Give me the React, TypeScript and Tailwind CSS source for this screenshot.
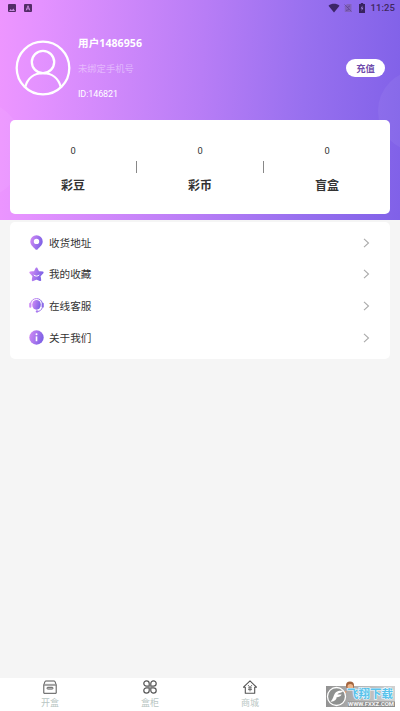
import React from "react";

const Gradient = ({ id }: { id: string }) => (
  <defs>
    <linearGradient id={id} x1="0" y1="0" x2="1" y2="0.3">
      <stop offset="0" stopColor="#d58cf6" />
      <stop offset="1" stopColor="#8163e6" />
    </linearGradient>
  </defs>
);

const PinIcon = () => (
  <svg viewBox="0 0 15 15" className="size-[15px]">
    <Gradient id="pin" />
    <path
      fill="url(#pin)"
      fillRule="evenodd"
      d="M7.500.3a6.200 6.200 0 0 1 6.200 6.200c0 3.300-2.700 5.400-5 7.700-.7.7-1.700.7-2.400 0C4 11.900 1.300 9.800 1.300 6.500A6.200 6.200 0 0 1 7.500.3Zm0 3.400a2.700 2.700 0 1 0 0 5.400 2.700 2.700 0 0 0 0-5.400Z"
    />
  </svg>
);

const StarIcon = () => (
  <svg viewBox="0 0 15 15" className="size-[15px]">
    <Gradient id="star" />
    <path
      fill="url(#star)"
      stroke="url(#star)"
      strokeWidth="2"
      strokeLinejoin="round"
      d="m7.500 1.500 1.700 3.400 4.400.6-3 3.200.6 4.400-3.700-1.600-3.700 1.600.6-4.400-3-3.200 4.400-.6Z"
    />
    <path d="M5 8.200c1.100 1.300 3.900 1.300 5 0" fill="none" stroke="#fff" strokeWidth="1" strokeLinecap="round" />
  </svg>
);

const HeadsetIcon = () => (
  <svg viewBox="0 0 15 15" className="size-[15px]">
    <Gradient id="headset" />
    <ellipse cx="7.500" cy="6.800" rx="4.300" ry="4.900" fill="url(#headset)" />
    <path d="M1.700 5.200C2.400 2.100 4.700.6 7.500.6s5.100 1.500 5.800 4.600" fill="none" stroke="url(#headset)" strokeWidth="1" />
    <rect x=".2" y="4.700" width="2.200" height="5" rx="1" fill="#ce8bf6" />
    <rect x="12.600" y="4.700" width="2.200" height="5" rx="1" fill="#8a68e8" />
    <path d="M13.300 9.500c-.6 2.500-2.400 3.700-4.800 4" fill="none" stroke="#9870eb" strokeWidth="1" />
    <circle cx="8" cy="13.400" r="1.200" fill="#a878ef" />
  </svg>
);

const InfoIcon = () => (
  <svg viewBox="0 0 15 15" className="size-[15px]">
    <Gradient id="info" />
    <circle cx="7.500" cy="7.500" r="7.200" fill="url(#info)" />
    <circle cx="7.500" cy="4.300" r="1" fill="#fff" />
    <path d="M7.500 6.400v4.800" stroke="#fff" strokeWidth="1.600" />
  </svg>
);

const BoxIcon = () => (
  <svg viewBox="0 0 14 14" className="size-[14px]" fill="none" stroke="#555" strokeWidth="1">
    <path d="M.8 4.600 2.300 1h9.400l1.500 3.600v8.700H.8Z" strokeLinejoin="round" />
    <path d="M1 4.300h12v1.200H1Z" fill="#999" stroke="#888" strokeWidth=".5" />
    <rect x="4" y="7.300" width="6" height="1.700" rx=".8" />
  </svg>
);

const CloverIcon = () => (
  <svg viewBox="0 0 14 14" className="size-[14px]" fill="none" stroke="#555" strokeWidth="1.200">
    <path d="M6.200 6.200H3.500a2.700 2.700 0 1 1 2.700-2.700ZM7.800 6.200h2.700a2.700 2.700 0 1 0-2.700-2.700ZM6.200 7.800H3.500a2.700 2.700 0 1 0 2.700 2.700ZM7.800 7.800h2.700a2.700 2.700 0 1 1-2.700 2.700Z" />
  </svg>
);

const ShopIcon = () => (
  <svg viewBox="0 0 14 14" className="size-[14px]" fill="none" stroke="#555" strokeWidth="1.100">
    <path d="M2.300 13.200V7.200H.5L7 .8l6.500 6.400h-1.800v6Z" strokeLinejoin="round" />
    <path d="m5 5 2 2.400L9 5M7 7.400v4M5 7.900h4M5 9.600h4" strokeWidth=".8" />
  </svg>
);

const stats = ["彩豆", "彩币", "盲盒"];

const menu = [
  { label: "收货地址", icon: <PinIcon /> },
  { label: "我的收藏", icon: <StarIcon /> },
  { label: "在线客服", icon: <HeadsetIcon /> },
  { label: "关于我们", icon: <InfoIcon /> },
];

const tabs = [
  { label: "开盒", icon: <BoxIcon /> },
  { label: "盒柜", icon: <CloverIcon /> },
  { label: "商城", icon: <ShopIcon /> },
];

function StatusBar() {
  return (
    <div className="flex h-4 items-center justify-between pl-2 pr-[5px] text-[#40275f]">
      <div className="flex items-center gap-2">
        <svg viewBox="0 0 8 8" className="size-2">
          <rect width="8" height="8" rx="1" fill="#532b67" />
          <path d="m1 7 1.700-2 1.200 1.200L5.400 4.500 7 7Z" fill="#c68bdf" />
        </svg>
        <svg viewBox="0 0 8 8" className="size-2">
          <rect width="8" height="8" rx="1" fill="#532b67" />
          <path d="M2.200 6.400 4 1.700l1.800 4.700M2.800 4.900h2.400" fill="none" stroke="#cf91e6" strokeWidth=".9" />
        </svg>
      </div>
      <div className="flex items-center">
        <svg viewBox="0 0 12 10" className="mr-1 h-[10px] w-3">
          <path d="M.5 2.800C3.700.2 8.300.2 11.500 2.800L6 9.600Z" fill="#3c2568" />
        </svg>
        <svg viewBox="0 0 8 10" className="mr-[7px] h-[10px] w-2">
          <path d="M3 1h4.500v8H.8V3.200Z" fill="#8262bd" />
          <path d="m.5 1.500 7 7M3 4.800l3-2M2 7.500l3-1" stroke="#5b408f" strokeWidth=".7" />
        </svg>
        <svg viewBox="0 0 6 10" className="mr-[5px] h-[10px] w-[6px]">
          <path d="M1.800 0h2.400v.9H6V10H0V.9h1.800Z" fill="#38235f" />
          <path d="M3.500 2.500 1.700 5.600h1.200L2.500 8l1.900-3.200H3.200Z" fill="#a587e8" />
        </svg>
        <span className="text-[9.500px] font-medium leading-none tracking-[0.1px]">11:25</span>
      </div>
    </div>
  );
}

function Watermark() {
  return (
    <div className="absolute bottom-1 right-[5px] h-[26px] w-[69px]">
      <svg viewBox="0 0 69 26" className="size-full">
        <defs>
          <linearGradient id="plate" x1="0" y1="0" x2="1" y2="0">
            <stop offset="0" stopColor="#929292" />
            <stop offset=".5" stopColor="#b5b5b5" />
            <stop offset="1" stopColor="#d2d2d2" />
          </linearGradient>
        </defs>
        <rect y="5" width="69" height="21" fill="url(#plate)" />
        <rect x="22" y="20.500" width="47" height="5.500" fill="#8d8d8d" />
        <circle cx="24" cy="4.500" r="4" fill="#a2653f" />
        <circle cx="24.300" cy="5.800" r="2.800" fill="#efb68b" />
        <path d="m20 10-2 4M28 10l2 3" stroke="#df9c70" strokeWidth="1.500" />
        <circle cx="10.500" cy="15.500" r="9" fill="#8f9190" stroke="#fff" strokeWidth="1.300" />
        <path d="M17.500 9.500c-4 .2-7 .3-8.800 3.200-1.400 2.400-1.300 5-4.200 8 4 .2 5.800-1.700 6.300-4.600 2.700.2 4-.8 4.800-2.500h-4.200c1.600-2.500 4.300-1.200 6.100-4.100Z" fill="#fff" />
        <text x="21" y="17.300" fontSize="11.500" fontWeight="700" fill="#59c2eb" stroke="#edfaff" strokeWidth="1.200" paintOrder="stroke" textLength="46">
          飞翔下载
        </text>
        <text x="22" y="25.200" fontSize="5" fontWeight="700" fill="#f4f4f4" textLength="46" lengthAdjust="spacingAndGlyphs" className="font-[Roboto]">
          WWW.FXXZ.COM
        </text>
      </svg>
    </div>
  );
}

export default function App() {
  return (
    <div className="flex h-[711px] w-[400px] flex-col overflow-hidden bg-[#f5f5f5] font-[Roboto,'Noto_Sans_CJK_SC',sans-serif] text-[#333]">
      <header className="relative h-[220px] shrink-0 overflow-hidden bg-[linear-gradient(93deg,#ee96ff_0%,#e492ff_10%,#b87df6_50%,#9870ef_75%,#8061e8_100%)]">
        <div className="absolute -left-[76px] top-[100px] size-[100px] rounded-full bg-white/5" />
        <div className="absolute -right-[60px] top-[70px] size-[82px] rounded-full bg-white/5" />
        <div className="relative">
          <StatusBar />
          <div className="flex h-[104px] items-start px-[15px] text-white">
            <svg viewBox="0 0 56 56" className="-ml-[0.500px] mt-6 size-[56px]" fill="none" stroke="#fff" strokeWidth="2.300">
              <circle cx="28" cy="28" r="26.300" />
              <circle cx="28" cy="22" r="11.200" />
              <path d="M10.300 46.800C12.500 38.500 19 33.200 28 33.200S43.500 38.500 45.700 46.800" />
            </svg>
            <div className="ml-[7.500px] mt-5 flex flex-col">
              <span className="h-[15px] font-['Noto_Sans','Noto_Sans_CJK_SC',sans-serif] text-[10.600px] font-bold leading-[15px] tracking-[0.05px]">用户1486956</span>
              <span className="mt-[11px] h-[14px] text-[9.300px] leading-[14px] text-white/40">未绑定手机号</span>
              <span className="mt-[11px] h-[14px] text-[9px] leading-[14px] tracking-[-0.1px]">ID:146821</span>
            </div>
            <button className="ml-auto mt-[43px] h-[18px] w-[39px] rounded-full bg-white text-[9.300px] font-bold leading-[19px] text-[#704dac]">
              充值
            </button>
          </div>
          <div className="mx-[10px] flex h-[94px] items-center rounded-[5px] bg-white">
            {stats.map((label, i) => (
              <React.Fragment key={label}>
                {i > 0 && <div className="h-3 w-px bg-[#888]" />}
                <div className="flex flex-1 flex-col items-center pt-[5px]">
                  <span className="text-[9.300px] leading-[14px]">0</span>
                  <span className="mt-[19px] text-[12px] font-bold leading-[18px]">{label}</span>
                </div>
              </React.Fragment>
            ))}
          </div>
        </div>
      </header>

      <main className="mx-[10px] mt-0.5 flex h-[137px] shrink-0 flex-col rounded-[5px] bg-white py-[5px]">
        {menu.map((item) => (
          <div key={item.label} className="flex h-[31.600px] items-center pl-[18.500px] pr-[20px]">
            {item.icon}
            <span className="ml-[5.500px] pt-[2px] text-[10.600px] leading-4">{item.label}</span>
            <svg viewBox="0 0 8 10" className="ml-auto h-[10px] w-2" fill="none" stroke="#aaa" strokeWidth="1.100">
              <path d="m2 .8 4.500 4.200L2 9.200" />
            </svg>
          </div>
        ))}
      </main>

      <nav className="relative mt-auto flex h-[33px] bg-white">
        {tabs.map((tab) => (
          <div key={tab.label} className="flex w-[100px] flex-col items-center pt-[2px]">
            {tab.icon}
            <span className="mt-[2px] text-[9px] leading-[14px] text-[#b9c6c3]">{tab.label}</span>
          </div>
        ))}
        <Watermark />
      </nav>
    </div>
  );
}
